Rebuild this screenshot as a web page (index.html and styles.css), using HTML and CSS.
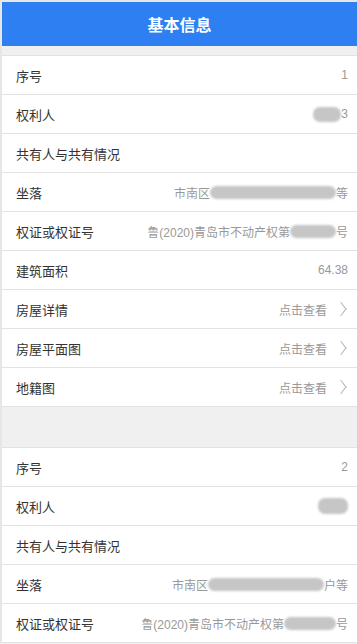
FILE: index.html
```html
<!DOCTYPE html>
<html lang="zh-CN">
<head>
    <meta charset="UTF-8">
    <title>基本信息</title>
    <link rel="stylesheet" href="styles.css">
</head>
<body>
<div class="page">
    <div class="header">基本信息</div>

    <div class="group">
        <div class="row"><span class="label">序号</span><span class="value">1</span></div>
        <div class="row"><span class="label">权利人</span><span class="value"><span class="mask mask-name"></span>3</span></div>
        <div class="row"><span class="label">共有人与共有情况</span><span class="value"></span></div>
        <div class="row"><span class="label">坐落</span><span class="value">市南区<span class="mask mask-addr"></span>等</span></div>
        <div class="row"><span class="label">权证或权证号</span><span class="value">鲁(2020)青岛市不动产权第<span class="mask mask-no"></span>号</span></div>
        <div class="row"><span class="label">建筑面积</span><span class="value">64.38</span></div>
        <div class="row link"><span class="label">房屋详情</span><span class="value">点击查看<i class="arrow"></i></span></div>
        <div class="row link"><span class="label">房屋平面图</span><span class="value">点击查看<i class="arrow"></i></span></div>
        <div class="row link"><span class="label">地籍图</span><span class="value">点击查看<i class="arrow"></i></span></div>
    </div>

    <div class="group">
        <div class="row"><span class="label">序号</span><span class="value">2</span></div>
        <div class="row"><span class="label">权利人</span><span class="value"><span class="mask mask-name2"></span></span></div>
        <div class="row"><span class="label">共有人与共有情况</span><span class="value"></span></div>
        <div class="row"><span class="label">坐落</span><span class="value">市南区<span class="mask mask-addr2"></span>户等</span></div>
        <div class="row"><span class="label">权证或权证号</span><span class="value">鲁(2020)青岛市不动产权第<span class="mask mask-no2"></span>号</span></div>
    </div>
</div>
</body>
</html>
```

FILE: styles.css
```css
html, body {
    margin: 0;
    padding: 0;
    background-color: #f0f0f0;
}
.page {
    border-top: 2px solid #e6e6e6;
    border-left: 2px solid #e6e6e6;
    font-family: "Noto Sans CJK SC", "Liberation Sans", sans-serif;
}
.header {
    height: 44px;
    line-height: 44px;
    background-color: #2d7ff2;
    color: #fff;
    font-size: 16px;
    font-weight: bold;
    text-align: center;
}
.group {
    margin-top: 9px;
    border-top: 1px solid #e2e2e2;
    background-color: #fff;
}
.group + .group {
    margin-top: 40px;
}
.row {
    display: flex;
    justify-content: space-between;
    align-items: center;
    height: 38px;
    padding: 0 9px 0 14px;
    border-bottom: 1px solid #e2e2e2;
}
.label {
    font-size: 13px;
    color: #333;
}
.value {
    display: flex;
    align-items: center;
    font-size: 12px;
    color: #999;
    font-family: "Liberation Sans", "Noto Sans CJK SC", sans-serif;
}
.mask {
    display: inline-block;
    height: 13px;
    background-color: #c6c6c6;
    border-radius: 7px;
    filter: blur(1.2px);
}
.mask-name { width: 28px; height: 15px; }
.mask-name2 { width: 30px; height: 16px; }
.mask-addr { width: 126px; }
.mask-addr2 { width: 116px; }
.mask-no { width: 46px; }
.mask-no2 { width: 52px; }
.arrow {
    display: inline-block;
    width: 7px;
    height: 7px;
    margin: 0 3px 0 10px;
    border-top: 1px solid #bbb;
    border-right: 1px solid #bbb;
    transform: scaleY(1.3) rotate(45deg);
}
```
